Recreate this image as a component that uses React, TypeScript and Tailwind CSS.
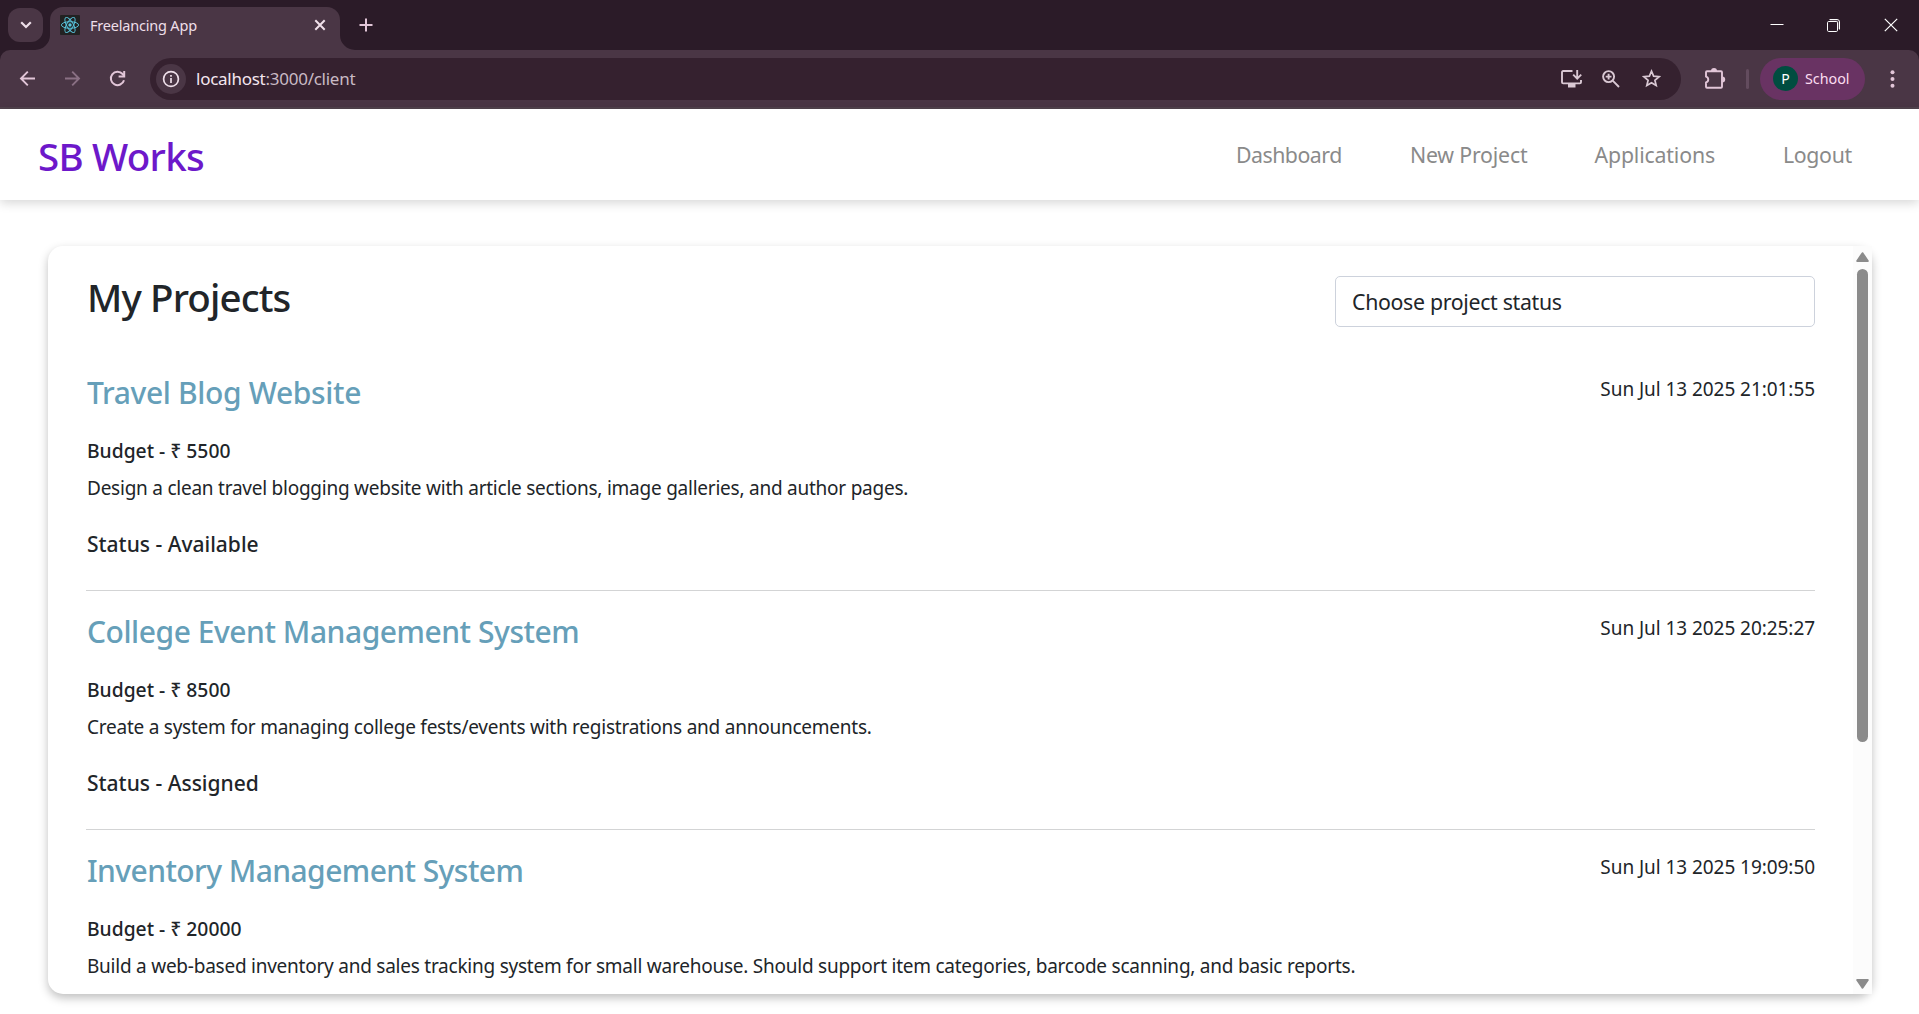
import React from 'react';

type Project = { title: string; budget: string; description: string; status: string; posted: string; titleTracking: string };

const projects: Project[] = [
  {
    title: 'Travel Blog Website',
    budget: '5500',
    description: 'Design a clean travel blogging website with article sections, image galleries, and author pages.',
    status: 'Available',
    posted: 'Sun Jul 13 2025 21:01:55',
    titleTracking: 'tracking-[-0.36px]',
  },
  {
    title: 'College Event Management System',
    budget: '8500',
    description: 'Create a system for managing college fests/events with registrations and announcements.',
    status: 'Assigned',
    posted: 'Sun Jul 13 2025 20:25:27',
    titleTracking: 'tracking-[-0.46px]',
  },
  {
    title: 'Inventory Management System',
    budget: '20000',
    description:
      'Build a web-based inventory and sales tracking system for small warehouse. Should support item categories, barcode scanning, and basic reports.',
    status: 'Available',
    posted: 'Sun Jul 13 2025 19:09:50',
    titleTracking: 'tracking-[-0.57px]',
  },
];

const navLinks = [
  { label: 'Dashboard', style: 'w-[107px] tracking-[-0.5px]' },
  { label: 'New Project', style: 'w-[117.5px] tracking-[-0.2px]' },
  { label: 'Applications', style: 'w-[121.5px] tracking-[-0.16px]' },
  { label: 'Logout', style: 'w-[71px] tracking-[-0.35px]' },
];

function ReactLogo() {
  return (
    <svg className="size-5 shrink-0" viewBox="0 0 20 20" fill="none" stroke="#58c4dc" strokeWidth="0.95">
      <rect width="20" height="20" rx="1" fill="#222" stroke="none" />
      <ellipse cx="10" cy="10" rx="8.6" ry="3.3" />
      <ellipse cx="10" cy="10" rx="8.6" ry="3.3" transform="rotate(60 10 10)" />
      <ellipse cx="10" cy="10" rx="8.6" ry="3.3" transform="rotate(120 10 10)" />
      <circle cx="10" cy="10" r="1.7" fill="#58c4dc" stroke="none" />
    </svg>
  );
}

function TabStrip() {
  return (
    <div className="flex h-[50px] items-start bg-[#2b1b28]">
      <button className="mt-2 ml-2 flex h-[34px] w-[35px] items-center justify-center rounded-[12px] bg-[#4a3645]">
        <svg className="h-[8px] w-[12px]" viewBox="0 0 12 8" fill="none" stroke="#eedfe9" strokeWidth="2.2">
          <path d="M1.2 1.2 6 6l4.8-4.8" />
        </svg>
      </button>
      <div className="relative mt-[7px] ml-[7px] flex h-[43px] w-[290px] items-center rounded-t-[13px] bg-[#4a3645] pb-[7px] pl-[10px]">
        <svg className="absolute bottom-0 -left-[15px] size-[15px]" viewBox="0 0 15 15">
          <path d="M15 0v15H0A15 15 0 0 0 15 0Z" fill="#4a3645" />
        </svg>
        <svg className="absolute -right-[15px] bottom-0 size-[15px]" viewBox="0 0 15 15">
          <path d="M0 0v15h15A15 15 0 0 1 0 0Z" fill="#4a3645" />
        </svg>
        <ReactLogo />
        <span className="ml-[10px] text-[14.5px] leading-5 tracking-[-0.2px] whitespace-nowrap text-[#eedfe9]">Freelancing App</span>
        <svg className="mr-[14px] ml-auto size-[12px]" viewBox="0 0 12 12" fill="none" stroke="#f0e0ea" strokeWidth="2">
          <path d="m1.3 1.3 9.4 9.4m0-9.4-9.4 9.4" />
        </svg>
      </div>
      <svg className="mt-[18px] ml-[19px] size-[14px]" viewBox="0 0 14 14" fill="none" stroke="#e2c6d8" strokeWidth="2">
        <path d="M7 .5v13M.5 7h13" />
      </svg>
      <div className="mt-[18px] mr-[21px] ml-auto flex items-center gap-[43px]">
        <svg className="h-[13px] w-[14px]" viewBox="0 0 14 13" stroke="#fff">
          <path d="M.5 5.5h13" />
        </svg>
        <svg className="mr-px size-[13px]" viewBox="0 0 13 13" fill="none" stroke="#fff">
          <path d="M2.5 .5H10A2.5 2.5 0 0 1 12.5 3v7.5" />
          <path d="M3 2.1h6.5q1.4 0 1.4 1.4V10" stroke="#9c8e99" />
          <rect x=".5" y="2.5" width="10" height="10" rx="1.2" />
        </svg>
        <svg className="size-[14px]" viewBox="0 0 14 14" fill="none" stroke="#fff" strokeWidth="1.2">
          <path d="m.8.8 12.4 12.4m0-12.4L.8 13.2" />
        </svg>
      </div>
    </div>
  );
}

function Toolbar() {
  return (
    <div className="bg-[#2b1b28]">
      <div className="flex h-[59px] items-center rounded-t-[10px] border-b-2 border-[#51434d] bg-[#4a3645] pl-[17px] text-[#e2c6d8]">
        <svg className="size-[21px]" viewBox="0 0 21 21" fill="none" stroke="currentColor" strokeWidth="1.9">
          <path d="M18 10.5H4m6.8-6.8L4 10.5l6.8 6.8" />
        </svg>
        <svg className="ml-6 size-[21px] text-[#8a7084]" viewBox="0 0 21 21" fill="none" stroke="currentColor" strokeWidth="1.9">
          <path d="M3 10.5h14m-6.8-6.8 6.8 6.8-6.8 6.8" />
        </svg>
        <svg className="ml-6 size-[21px]" viewBox="0 0 21 21" fill="none" stroke="currentColor" strokeWidth="2">
          <path d="M17 12.2A6.7 6.7 0 1 1 15.6 6L17.3 8" />
          <path d="M17.2 3v5.6h-5.6" />
        </svg>
        <div className="ml-[22px] flex h-[42px] w-[1531px] items-center rounded-full bg-[#35212f] pr-[20px] pl-[6px]">
          <div className="flex size-[30px] items-center justify-center rounded-full bg-[#4a3645]">
            <svg className="size-[18px]" viewBox="0 0 18 18" fill="none" stroke="#eedfe9" strokeWidth="1.7">
              <circle cx="9" cy="9" r="7.4" />
              <path d="M9 8v5M9 5v1.8" />
            </svg>
          </div>
          <span className="mt-px ml-[10px] text-[17px] leading-6 tracking-[-0.26px] whitespace-nowrap text-[#c9bac4]">
            <span className="text-[#f4e6ef]">localhost</span>:3000/client
          </span>
          <div className="ml-auto flex items-center gap-[20px] text-[#d9c8d3]">
            <svg className="h-[20px] w-[21px]" viewBox="0 0 21 20" fill="none" stroke="currentColor" strokeWidth="1.9">
              <path d="M11.5 2H2.2q-1.2 0-1.2 1.2v10q0 1.2 1.2 1.2h16.6q1.2 0 1.2-1.2V11" />
              <path d="M16.2 1v8.5m-4-3.8 4 4 4-4" />
              <path d="M7 15h7.5v3.5H7z" fill="currentColor" stroke="none" />
            </svg>
            <svg className="size-[18px]" viewBox="0 0 18 18" fill="none" stroke="currentColor" strokeWidth="1.9">
              <circle cx="6.6" cy="6.6" r="5.5" />
              <path d="m10.7 10.7 6.3 6.3M6.6 3.7v5.8M3.7 6.6h5.8" />
            </svg>
            <svg className="ml-[2px] size-[19px]" viewBox="0 0 19 19" fill="none" stroke="currentColor" strokeWidth="1.7">
              <path d="m9.5 2.2 2.1 5 5.5.5-4.2 3.6 1.3 5.3-4.7-2.8-4.7 2.8 1.3-5.3-4.2-3.6 5.5-.5Z" />
            </svg>
          </div>
        </div>
        <svg className="ml-[23px] h-[22px] w-[22px]" viewBox="0 0 22 22" fill="none" stroke="currentColor" strokeWidth="1.9">
          <path d="M2 4.2q0-1 1-1h14q1 0 1 1v14.6q0 1-1 1H3q-1 0-1-1v-4.3a3 3 0 0 0 0-5.8Z" strokeLinejoin="round" />
          <path d="M7 3a3 3 0 0 1 6 0ZM18.2 8.5a3 3 0 0 1 0 6Z" fill="currentColor" stroke="none" />
        </svg>
        <div className="ml-[20px] h-5 w-[3px] rounded-full bg-[#634c5e]" />
        <div className="ml-[11px] flex h-[42px] w-[105px] items-center rounded-full bg-[#693363] pl-[13px]">
          <div className="flex size-[25px] items-center justify-center rounded-full bg-[#004d40] text-[14px] leading-none text-white">P</div>
          <span className="ml-[7px] text-[14.3px] leading-5 text-[#fbdcf0]">School</span>
        </div>
        <svg className="ml-[25px] h-[18px] w-[5px]" viewBox="0 0 5 18" fill="currentColor">
          <circle cx="2.5" cy="2.2" r="2" />
          <circle cx="2.5" cy="9" r="2" />
          <circle cx="2.5" cy="15.8" r="2" />
        </svg>
      </div>
    </div>
  );
}

function ProjectItem({ project }: { project: Project }) {
  return (
    <article className="flex h-[239px] shrink-0 items-start justify-between overflow-hidden border-b border-[#d3d4d5] pt-[23px]">
      <div className="pl-px whitespace-nowrap">
        <h3 className={`text-[30px] leading-9 font-medium text-[#669fb9] ${project.titleTracking}`}>{project.title}</h3>
        <h5 className="mt-[25px] text-[19.3px] leading-[30px] font-medium">Budget - ₹ {project.budget}</h5>
        <p className="mt-[7px] text-[19px] leading-[30px] tracking-[-0.24px]">{project.description}</p>
        <h5 className="mt-[28px] text-[21px] leading-[26px] font-medium">Status - {project.status}</h5>
      </div>
      <p className="-mt-px text-[19px] leading-[30px] tracking-[-0.06px] whitespace-nowrap">{project.posted}</p>
    </article>
  );
}

function Scrollbar() {
  return (
    <div className="flex w-[19px] shrink-0 flex-col items-center bg-[#fcfcfc] pt-[6px] pb-[5px]">
      <svg className="h-[10px] w-[13px]" viewBox="0 0 13 10" fill="#8b8b8b" stroke="#8b8b8b" strokeWidth="2" strokeLinejoin="round">
        <path d="M6.5 1.2 11.8 9H1.2Z" />
      </svg>
      <div className="mt-[7px] h-[473px] w-[11px] rounded-full bg-[#8b8b8b]" />
      <svg className="mt-auto h-[10px] w-[13px]" viewBox="0 0 13 10" fill="#8b8b8b" stroke="#8b8b8b" strokeWidth="2" strokeLinejoin="round">
        <path d="M1.2 1h10.6L6.5 8.8Z" />
      </svg>
    </div>
  );
}

export default function App() {
  return (
    <div className="flex h-screen w-full flex-col overflow-hidden bg-white font-['Noto_Sans','Open_Sans',sans-serif] text-[#212529]">
      <TabStrip />
      <Toolbar />
      <nav className="flex h-[91px] shrink-0 items-center justify-between pr-[65px] pl-[38px] shadow-[0_3px_10px_rgba(0,0,0,0.16)]">
        <h1 className="pt-[3px] text-[38.5px] leading-[48px] font-medium tracking-[-0.75px] text-[#6d18ca]">SB Works</h1>
        <div className="flex gap-[67px] pt-px text-[21.3px] leading-8 whitespace-nowrap text-[#8a8a8a]">
          {navLinks.map((link) => (
            <a key={link.label} className={link.style}>
              {link.label}
            </a>
          ))}
        </div>
      </nav>
      <main className="mt-[46px] ml-12 flex h-[748px] w-[1824px] shrink-0 rounded-[15px] bg-white shadow-[0_4px_10px_rgba(0,0,0,0.25)]">
        <div className="flex min-w-0 flex-1 flex-col overflow-hidden rounded-l-[15px] pt-[30px] pr-[38px] pl-[38px]">
          <div className="mb-[25px] flex shrink-0 items-start justify-between">
            <h2 className="pl-px text-[38.5px] leading-[42px] font-medium tracking-[-0.88px]">My Projects</h2>
            <div className="flex h-[51px] w-[480px] items-center rounded-[5px] border border-[#cdd2dc] pl-4 text-[21.3px] tracking-[-0.32px]">
              Choose project status
            </div>
          </div>
          {projects.map((project) => (
            <ProjectItem key={project.title} project={project} />
          ))}
        </div>
        <Scrollbar />
      </main>
    </div>
  );
}
